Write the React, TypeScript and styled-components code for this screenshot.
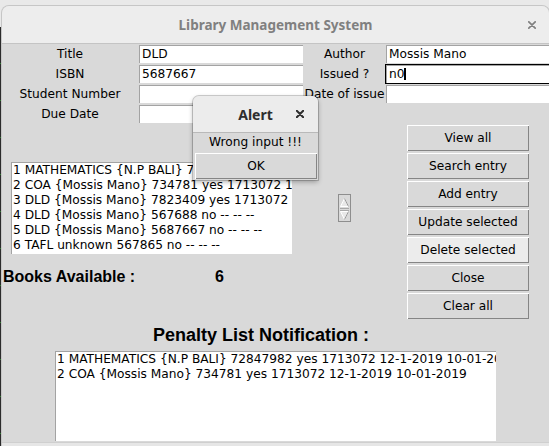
import React from "react";
import styled, { createGlobalStyle } from "styled-components";

const Global = createGlobalStyle`
  html, body { margin: 0; padding: 0; }
  body {
    width: 549px;
    height: 446px;
    overflow: hidden;
    background: #e9e9e9;
    font-family: "DejaVu Sans", sans-serif;
    font-size: 12.2px;
    color: #000;
  }
`;

const Page = styled.div`
  position: relative;
  display: flex;
  width: 549px;
  height: 446px;
  overflow: hidden;
`;

const DesktopStrip = styled.div`
  flex: none;
  width: 2px;
  margin-top: 27px;
  background: repeating-linear-gradient(
    to bottom,
    #2b2b2b 0px,
    #2b2b2b 36px,
    #2f7a2f 36px,
    #2f7a2f 37px
  );
`;

const Window = styled.div`
  flex: none;
  width: 547px;
  height: 440px;
  margin-top: 6px;
  display: flex;
  flex-direction: column;
  border-radius: 7px 7px 0 0;
  overflow: hidden;
  background: #d9d9d9;
  box-shadow: 0 0 0 1px #c6c6c6;
`;

const TitleBar = styled.div`
  flex: none;
  height: 37px;
  border-bottom: 1px solid #c4c4c4;
  background: #ededed;
  display: grid;
  grid-template-columns: 1fr auto 1fr;
  align-items: center;
`;

const WindowTitle = styled.div`
  grid-column: 2;
  font-family: "Noto Sans", sans-serif;
  font-weight: 700;
  font-size: 13.5px;
  color: #808080;
  white-space: nowrap;
`;

const CloseBox = styled.div<{ $dark?: boolean; $right: number }>`
  grid-column: 3;
  justify-self: end;
  margin-right: ${(p) => p.$right}px;
  display: flex;
  align-items: center;
  color: ${(p) => (p.$dark ? "#2e2e2e" : "#808080")};
`;

const Body = styled.div`
  flex: 1;
  display: flex;
  flex-direction: column;
`;

const FormGrid = styled.div`
  display: grid;
  grid-template-columns: 136px 166px 81px 166px;
  grid-auto-rows: 20px;
`;

const FieldLabel = styled.div`
  text-align: center;
  line-height: 20px;
  white-space: nowrap;
`;

const Entry = styled.div<{ $focused?: boolean }>`
  box-sizing: border-box;
  height: 20px;
  border: 1px solid ${(p) => (p.$focused ? "#000" : "#d9d9d9")};
  background: #fff;
  background-clip: padding-box;
  box-shadow: inset 1px 1px 0 #a3a3a3, inset -1px -1px 0 #fff;
  padding-left: 3px;
  line-height: 18px;
  white-space: nowrap;
  overflow: hidden;
`;

const Caret = styled.span`
  display: inline-block;
  width: 0;
  height: 12px;
  border-left: 2px solid #000;
  vertical-align: -2px;
`;

const MidRow = styled.div`
  display: flex;
  align-items: flex-start;
  height: 196px;
`;

const LeftCol = styled.div`
  width: 291px;
  display: flex;
  flex-direction: column;
`;

const ListBox = styled.div<{ $w: number; $h: number; $top: number; $left: number }>`
  box-sizing: border-box;
  width: ${(p) => p.$w}px;
  height: ${(p) => p.$h}px;
  margin-top: ${(p) => p.$top}px;
  margin-left: ${(p) => p.$left}px;
  border: 1px solid #d9d9d9;
  background: #fff;
  background-clip: padding-box;
  box-shadow: inset 1px 1px 0 #a3a3a3, inset -1px -1px 0 #fff;
  padding: 1px 0 0 2px;
  overflow: hidden;
`;

const ListLine = styled.div`
  line-height: 15px;
  white-space: nowrap;
`;

const BooksRow = styled.div`
  display: flex;
  margin-top: 13px;
  padding-left: 1px;
  font-family: "Liberation Sans", Arial, sans-serif;
  font-weight: 700;
  font-size: 16px;
  line-height: 18px;
  white-space: nowrap;
`;

const BooksLabel = styled.div`
  width: 212px;
`;

const Scroller = styled.div`
  flex: none;
  width: 13px;
  height: 28px;
  margin-left: 45px;
  margin-top: 70px;
  display: flex;
`;

const ButtonCol = styled.div`
  flex: none;
  width: 124px;
  margin-left: 55px;
  display: flex;
  flex-direction: column;
`;

const TkButton = styled.div<{ $hover?: boolean }>`
  box-sizing: border-box;
  height: 28px;
  border: 1px solid #d9d9d9;
  background: ${(p) => (p.$hover ? "#ececec" : "#d9d9d9")};
  background-clip: padding-box;
  box-shadow: inset 1px 1px 0 #fff, inset -1px -1px 0 #858585;
  text-align: center;
  line-height: 26px;
  white-space: nowrap;
`;

const PenaltyTitle = styled.div`
  margin-top: 5px;
  margin-left: 151px;
  font-family: "Liberation Sans", Arial, sans-serif;
  font-weight: 700;
  font-size: 18px;
  line-height: 20px;
  white-space: nowrap;
`;

const Footer = styled.div`
  margin-top: auto;
  height: 3px;
  border-top: 1px solid #cfcfcf;
  background: #e6e6e6;
`;

const Dialog = styled.div`
  position: absolute;
  left: 193px;
  top: 96px;
  width: 125px;
  height: 84px;
  display: flex;
  flex-direction: column;
  border-radius: 6px 6px 0 0;
  background: #d9d9d9;
  box-shadow: 0 0 0 1px rgba(0, 0, 0, 0.18), 0 2px 5px rgba(0, 0, 0, 0.3);
  overflow: hidden;
`;

const DialogTitleBar = styled.div`
  flex: none;
  height: 36px;
  border-bottom: 1px solid #b9b9b9;
  background: #ececec;
  display: grid;
  grid-template-columns: 1fr auto 1fr;
  align-items: center;
`;

const DialogTitle = styled.div`
  grid-column: 2;
  font-family: "Noto Sans", sans-serif;
  font-weight: 700;
  font-size: 14px;
  color: #2e2e2e;
`;

const DialogMessage = styled.div`
  text-align: center;
  line-height: 19px;
  white-space: nowrap;
`;

const DialogButton = styled(TkButton)`
  margin-left: 1px;
`;

const XIcon = ({ size = 8, weight = 1.7 }: { size?: number; weight?: number }) => (
  <svg width={size} height={size} viewBox="0 0 8 8">
    <path d="M0.8 0.8 L7.2 7.2 M7.2 0.8 L0.8 7.2" stroke="currentColor" strokeWidth={weight} strokeLinecap="round" />
  </svg>
);

const ScrollArrows = () => (
  <svg width="13" height="28" viewBox="0 0 13 28">
    <rect x="0.5" y="0.5" width="12" height="27" fill="#d9d9d9" stroke="#8e8e8e" />
    <path d="M2.5 12.5 L6.5 4.5 L10.5 12.5 Z" fill="#e8e8e8" stroke="#ffffff" />
    <path d="M10.5 12.5 L6.5 4.5" stroke="#9a9a9a" />
    <path d="M2 14.5 H11 M2 16.5 H11" stroke="#a8a8a8" />
    <path d="M2.5 17.5 L6.5 25.5 L10.5 17.5 Z" fill="#e8e8e8" stroke="#ffffff" />
    <path d="M6.5 25.5 L10.5 17.5" stroke="#9a9a9a" />
  </svg>
);

const books = [
  "1 MATHEMATICS {N.P BALI} 72847982 yes 1713072 12-1-2019 10-01-2019",
  "2 COA {Mossis Mano} 734781 yes 1713072 12-1-2019 10-01-2019",
  "3 DLD {Mossis Mano} 7823409 yes 1713072 12-1-2019 10-01-2019",
  "4 DLD {Mossis Mano} 567688 no -- -- --",
  "5 DLD {Mossis Mano} 5687667 no -- -- --",
  "6 TAFL unknown 567865 no -- -- --",
];

const penalties = [
  "1 MATHEMATICS {N.P BALI} 72847982 yes 1713072 12-1-2019 10-01-2019",
  "2 COA {Mossis Mano} 734781 yes 1713072 12-1-2019 10-01-2019",
];

const actions = [
  "View all",
  "Search entry",
  "Add entry",
  "Update selected",
  "Delete selected",
  "Close",
  "Clear all",
];

export default function App() {
  return (
    <>
      <Global />
      <Page>
        <DesktopStrip />
        <Window>
          <TitleBar>
            <WindowTitle>Library Management System</WindowTitle>
            <CloseBox $right={13}>
              <XIcon />
            </CloseBox>
          </TitleBar>
          <Body>
            <FormGrid>
              <FieldLabel>Title</FieldLabel>
              <Entry>DLD</Entry>
              <FieldLabel>Author</FieldLabel>
              <Entry>Mossis Mano</Entry>

              <FieldLabel>ISBN</FieldLabel>
              <Entry>5687667</Entry>
              <FieldLabel>Issued ?</FieldLabel>
              <Entry $focused>
                n0
                <Caret />
              </Entry>

              <FieldLabel>Student Number</FieldLabel>
              <Entry />
              <FieldLabel>Date of issue</FieldLabel>
              <Entry />

              <FieldLabel>Due Date</FieldLabel>
              <Entry />
            </FormGrid>

            <MidRow>
              <LeftCol>
                <ListBox $w={283} $h={94} $top={37} $left={8}>
                  {books.map((b) => (
                    <ListLine key={b}>{b}</ListLine>
                  ))}
                </ListBox>
                <BooksRow>
                  <BooksLabel>Books Available :</BooksLabel>
                  <div>6</div>
                </BooksRow>
              </LeftCol>
              <Scroller>
                <ScrollArrows />
              </Scroller>
              <ButtonCol>
                {actions.map((a) => (
                  <TkButton key={a} $hover={a === "Delete selected"}>
                    {a}
                  </TkButton>
                ))}
              </ButtonCol>
            </MidRow>

            <PenaltyTitle>Penalty List Notification :</PenaltyTitle>
            <ListBox $w={443} $h={92} $top={5} $left={52}>
              {penalties.map((p) => (
                <ListLine key={p}>{p}</ListLine>
              ))}
            </ListBox>
            <Footer />
          </Body>
        </Window>

        <Dialog>
          <DialogTitleBar>
            <DialogTitle>Alert</DialogTitle>
            <CloseBox $dark $right={14}>
              <XIcon size={8} weight={2} />
            </CloseBox>
          </DialogTitleBar>
          <DialogMessage>Wrong input !!!</DialogMessage>
          <DialogButton>OK</DialogButton>
        </Dialog>
      </Page>
    </>
  );
}
